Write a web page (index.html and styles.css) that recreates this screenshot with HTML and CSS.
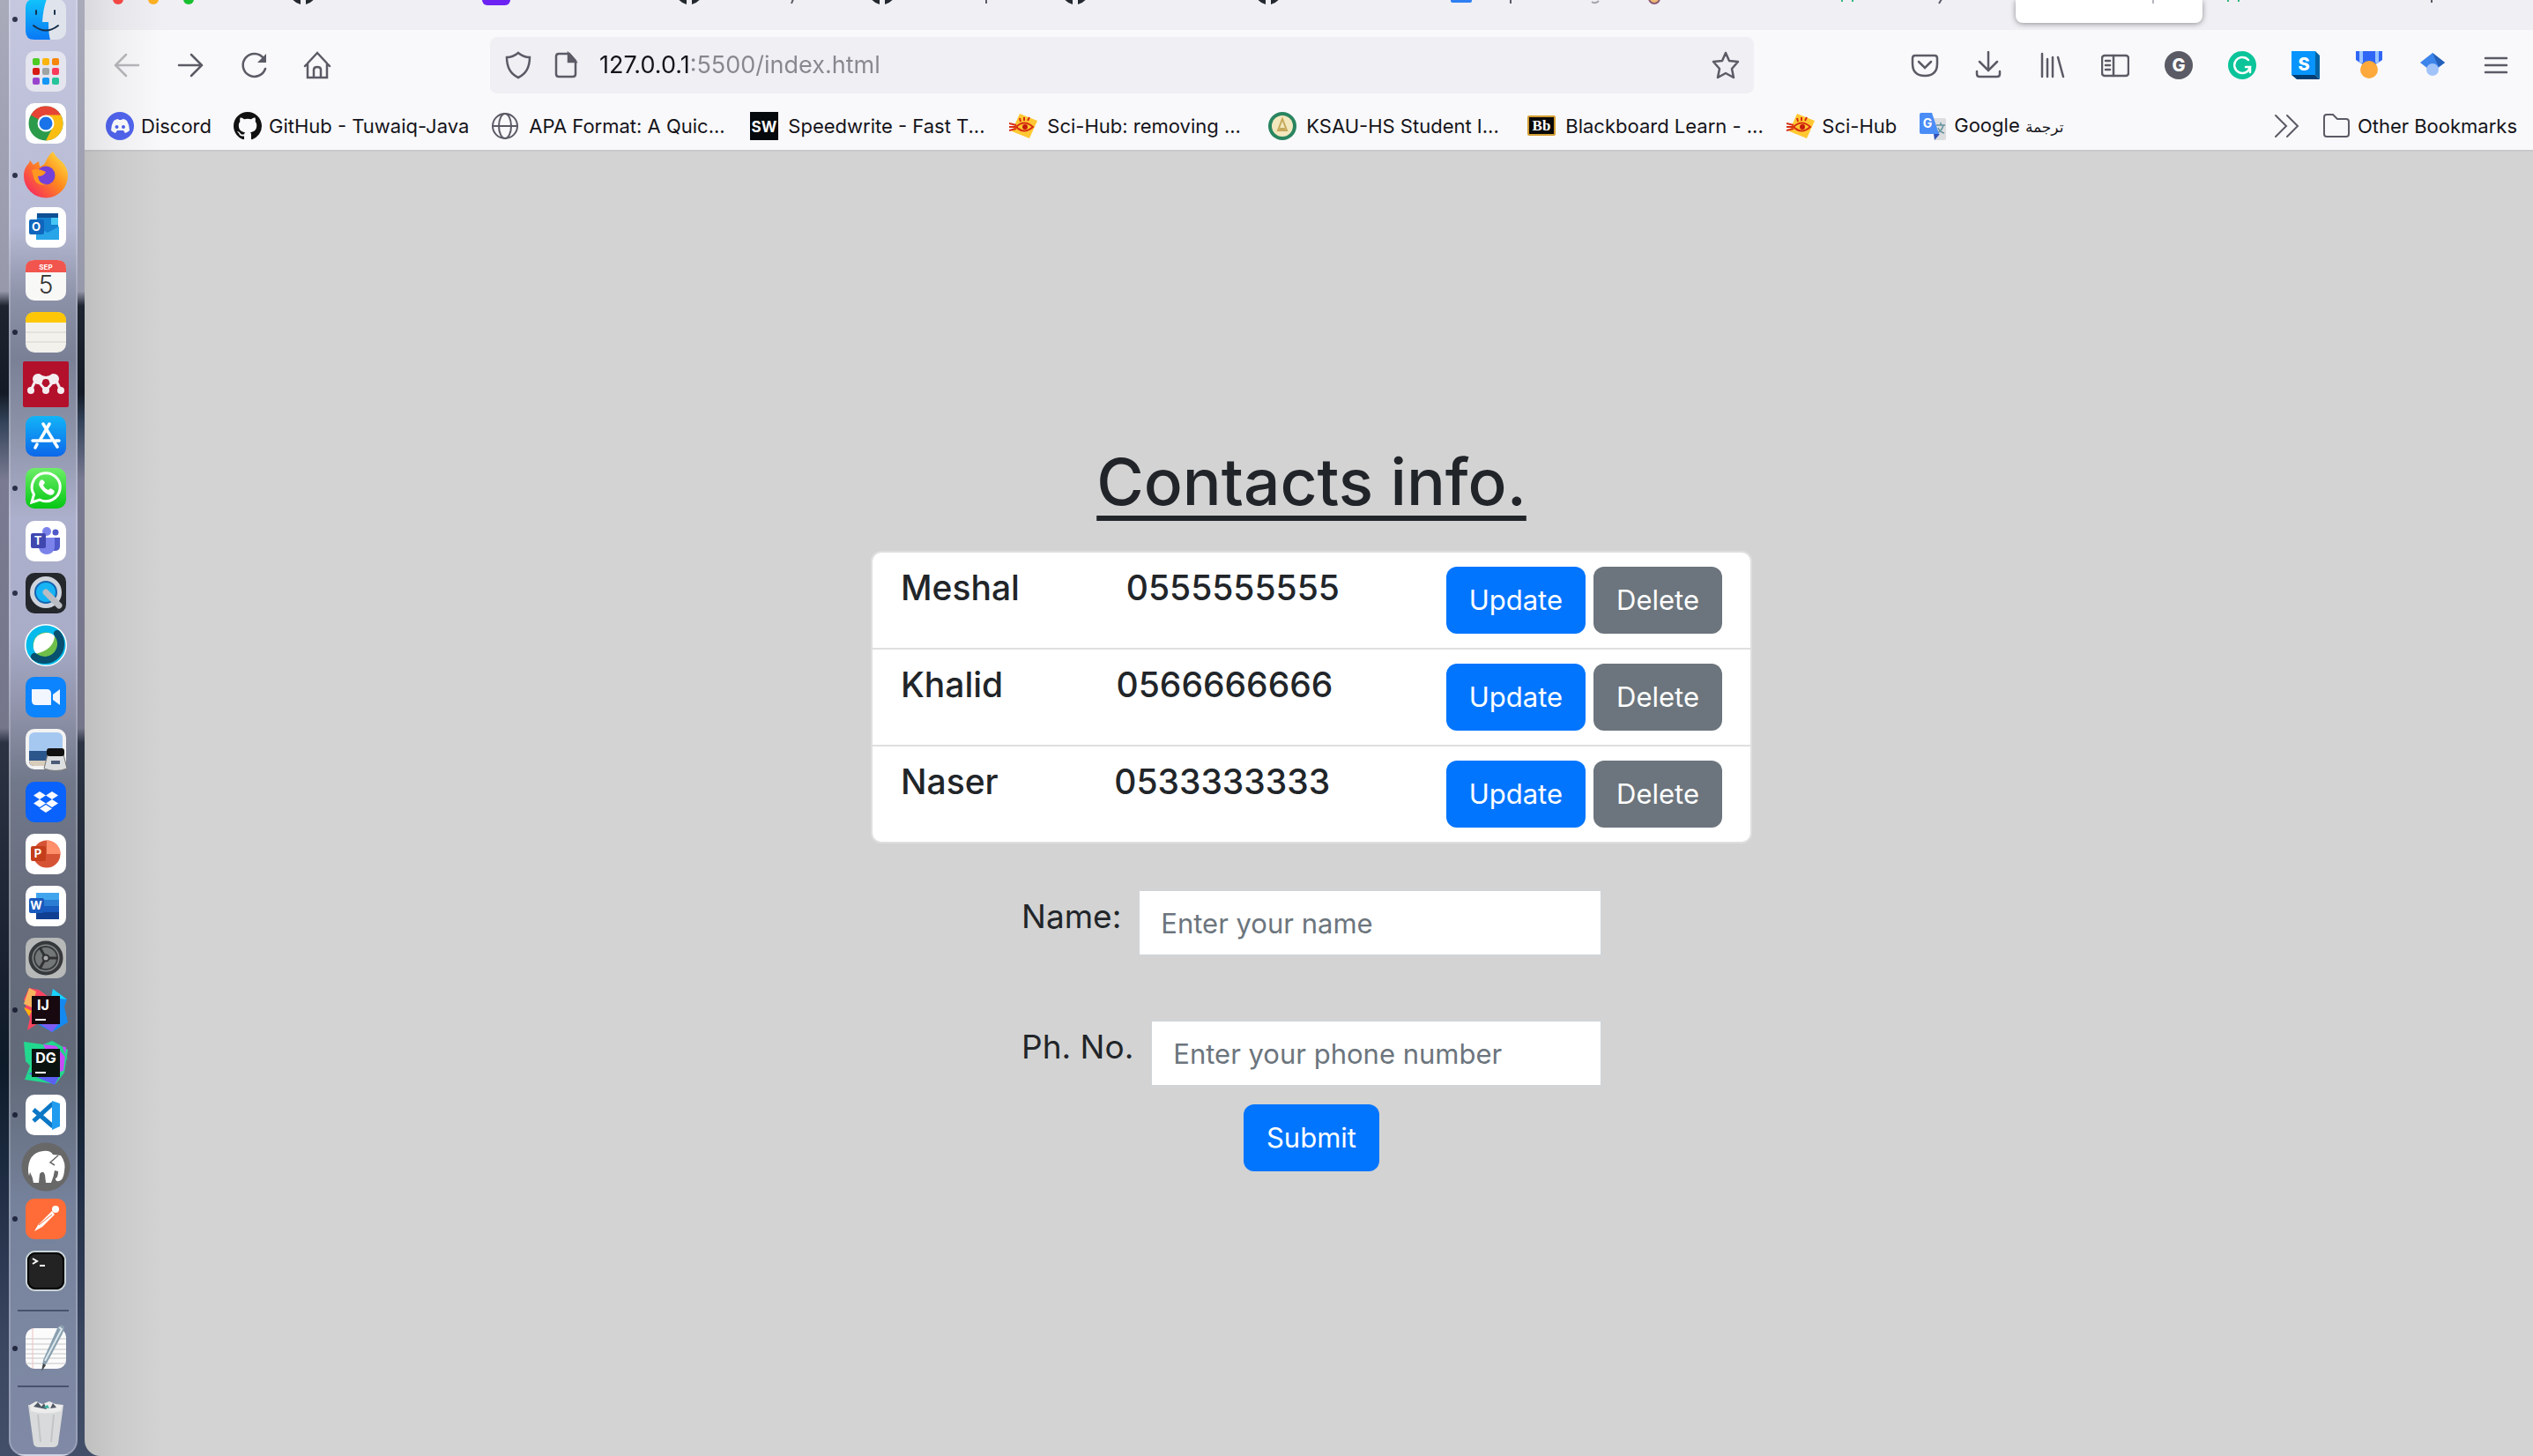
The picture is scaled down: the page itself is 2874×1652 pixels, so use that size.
FILE: index.html
```html
<!DOCTYPE html>
<html lang="en">
<head>
<meta charset="utf-8">
<title>Contacts info.</title>
<link rel="stylesheet" href="styles.css">
</head>
<body>
<aside class="dock" aria-label="Dock">
  <ul class="apps">
    <li class="running"><svg viewBox="0 0 56 56"><defs><linearGradient id="finder" x2="0" y2="1"><stop stop-color="#10c3fb"/><stop offset="1" stop-color="#0a78f5"/></linearGradient></defs><rect x="5" y="5" width="46" height="46" rx="10" fill="#dfe4ec"/><path d="M33 5H15Q5 5 5 15v26q0 10 10 10h18q-2-6-2-20h-7Q25 15 29 5Z" fill="url(#finder)"/><path d="M17 18v4M38 18v4M14 35q14 11 28 0" fill="none" stroke="#17304a" stroke-width="2" stroke-linecap="round"/></svg></li>
    <li><svg viewBox="0 0 56 56"><rect x="5" y="5" width="46" height="46" rx="10" fill="#e4e5ee"/><g><rect x="13" y="13" width="8" height="8" rx="2" fill="#4ccb22"/><rect x="24" y="13" width="8" height="8" rx="2" fill="#fbb40a"/><rect x="35" y="13" width="8" height="8" rx="2" fill="#f5860a"/><rect x="13" y="24" width="8" height="8" rx="2" fill="#d81a14"/><rect x="24" y="24" width="8" height="8" rx="2" fill="#9ea3a4"/><rect x="35" y="24" width="8" height="8" rx="2" fill="#f93a5c"/><rect x="13" y="35" width="8" height="8" rx="2" fill="#9944cc"/><rect x="24" y="35" width="8" height="8" rx="2" fill="#1397f5"/><rect x="35" y="35" width="8" height="8" rx="2" fill="#27c39a"/></g></svg></li>
    <li><svg viewBox="0 0 56 56"><rect x="5" y="5" width="46" height="46" rx="10" fill="#fff"/><circle cx="28" cy="28" r="19.500" fill="#2b9b4b"/><path d="M28 28 11 18.500A19.500 19.500 0 0 1 45 18.500Z" fill="#e64435"/><path d="M28 18.500h17A19.500 19.500 0 0 1 28 47.500L36 32Z" fill="#fcbd12"/><circle cx="28" cy="28" r="9.500" fill="#fff"/><circle cx="28" cy="28" r="7.500" fill="#1a73e8"/></svg></li>
    <li class="running"><svg viewBox="0 0 56 56"><defs><linearGradient id="fox" x1="1" x2="0" y2="1"><stop stop-color="#fff04a"/><stop offset=".45" stop-color="#ff8a1c"/><stop offset="1" stop-color="#f5156c"/></linearGradient></defs><path d="M36 1q3 5 6 8c7 5 11 12 11 19a25 25 0 0 1-50 1c0-8 3-12 6-15l1-3 4 5 6-4 1 6q5-1 7-6 3-7 8-11Z" fill="url(#fox)"/><circle cx="28" cy="28" r="10.500" fill="#7540d8"/><path d="M12 22q7-3 16 2-2 5-9 5 1 9 10 9-9 3-14-5Z" fill="#ff9720"/></svg></li>
    <li><svg viewBox="0 0 56 56"><rect x="5" y="5" width="46" height="46" rx="10" fill="#fff"/><path d="M18 12h24v30H17Z" fill="#1481d1"/><path d="M18 12h24v5H18Z" fill="#0c4f94"/><path d="M34 17h8v8h-8Z" fill="#45c6f5"/><path d="m17 27 13 7 13-7v15H17Z" fill="#28a5e8"/><rect x="9" y="19" width="17" height="17" rx="2" fill="#0f66bc"/><text x="17" y="32" class="glyph">O</text></svg></li>
    <li><svg viewBox="0 0 56 56"><rect x="5" y="5" width="46" height="46" rx="10" fill="#f8f8f6"/><path d="M5 19v-4Q5 5 15 5h26q10 0 10 10v4Z" fill="#f2554d"/><text x="28" y="16" class="glyph tiny">SEP</text><text x="28" y="43" class="glyph day">5</text></svg></li>
    <li class="running"><svg viewBox="0 0 56 56"><rect x="5" y="5" width="46" height="46" rx="10" fill="#f3f1ec"/><path d="M5 17v-2Q5 5 15 5h26q10 0 10 10v2Z" fill="#fdc708"/><path d="M5 28h46M5 39h46" stroke="#d5d3cd"/></svg></li>
    <li><svg viewBox="0 0 56 56"><rect x="2" y="2" width="52" height="52" rx="2" fill="#b3102c"/><path d="m11 35 6-13 11 13 11-13 6 13" stroke="#f4edf0" stroke-width="3" fill="none"/><g fill="#f4edf0"><circle cx="19" cy="22" r="6"/><circle cx="37" cy="22" r="6"/><path d="M20 16q8 6 16 0l1 12q-9-4-18 0Z"/><circle cx="11" cy="35" r="4"/><circle cx="28" cy="35" r="4"/><circle cx="45" cy="35" r="4"/></g><circle cx="28" cy="26" r="4" fill="#b3102c"/></svg></li>
    <li><svg viewBox="0 0 56 56"><defs><linearGradient id="store" x2="0" y2="1"><stop stop-color="#12b4f8"/><stop offset="1" stop-color="#0c67ea"/></linearGradient></defs><rect x="5" y="5" width="46" height="46" rx="10" fill="url(#store)"/><path d="M32 14 21 33M25 14l16 26M13 33h21M39 33h4M18 37l-2 4" fill="none" stroke="#fff" stroke-width="3.500" stroke-linecap="round"/></svg></li>
    <li class="running"><svg viewBox="0 0 56 56"><defs><linearGradient id="wa" x2="0" y2="1"><stop stop-color="#6dee68"/><stop offset="1" stop-color="#04c713"/></linearGradient></defs><rect x="5" y="5" width="46" height="46" rx="10" fill="url(#wa)"/><path d="M12 44l2.500-9A16 16 0 1 1 21 41Z" fill="none" stroke="#fff" stroke-width="3"/><path d="M22 19q-4 4 1 10 8 9 13 6 4-4-1-6-2-2-4 1-5-2-6-6 3-2 1-4-2-3-4-1Z" fill="#fff"/></svg></li>
    <li><svg viewBox="0 0 56 56"><rect x="5" y="5" width="46" height="46" rx="10" fill="#fff"/><circle cx="29" cy="17" r="5" fill="#7b83eb"/><circle cx="39" cy="18" r="3.500" fill="#5059c9"/><path d="M35 24h9v10q0 5-6 5h-3Z" fill="#5059c9"/><path d="M20 24h18v12q-2 7-9 7t-9-7Z" fill="#7b83eb"/><rect x="11" y="19" width="17" height="17" rx="2" fill="#4048b0"/><text x="19" y="32" class="glyph">T</text></svg></li>
    <li class="running"><svg viewBox="0 0 56 56"><rect x="5" y="5" width="46" height="46" rx="10" fill="#24272b"/><circle cx="28" cy="27" r="15" fill="#16b4f4" stroke="#cfd3dc" stroke-width="6"/><circle cx="28" cy="27" r="12" fill="none" stroke="#1565b0" stroke-width="2"/><path d="m28 27 15 15" stroke="#b9bcc2" stroke-width="7" stroke-linecap="round"/></svg></li>
    <li><svg viewBox="0 0 56 56"><circle cx="28" cy="28" r="24" fill="#fff"/><circle cx="28" cy="28" r="18" fill="#6fbe4a"/><path d="M14 34Q12 15 29 14q7 0 9 2 0 17-22 22Z" fill="#fff"/><circle cx="28" cy="28" r="18.500" fill="none" stroke="#06bbeb" stroke-width="8"/><path d="M41 15A18.500 18.500 0 0 1 15 41" fill="none" stroke="#07506f" stroke-width="8" stroke-linecap="round"/></svg></li>
    <li><svg viewBox="0 0 56 56"><rect x="5" y="5" width="46" height="46" rx="10" fill="#0b84fd"/><path d="M12 19h17q5 0 5 5v13H17q-5 0-5-5ZM36 25l8-6v18l-8-6Z" fill="#f1f6ff"/></svg></li>
    <li><svg viewBox="0 0 56 56"><rect x="5" y="5" width="46" height="46" rx="10" fill="#f3f3f3"/><rect x="9" y="9" width="38" height="38" rx="6" fill="#a5c8f1"/><path d="M9 30h38v11q0 6-6 6H15q-6 0-6-6Z" fill="#2b568c"/><path d="M9 41h30v6H15q-6 0-6-6Z" fill="#d8cdbb"/><path d="m30 34-4 16q13 5 26 0l-4-16Z" fill="#dddedf" stroke="#777"/><rect x="29" y="27" width="20" height="9" rx="3" fill="#111"/><path d="M34 43h10" stroke="#4c5b77" stroke-width="4"/></svg></li>
    <li><svg viewBox="0 0 56 56"><rect x="5" y="5" width="46" height="46" rx="10" fill="#0a62fc"/><path d="m21 16 7 4.500-7 4.500-7-4.500ZM35 16l7 4.500-7 4.500-7-4.500ZM21 25l7 4.500-7 4.500-7-4.500ZM35 25l7 4.500-7 4.500-7-4.500ZM28 31l7 4.500-7 4.500-7-4.500Z" fill="#f8faff"/></svg></li>
    <li><svg viewBox="0 0 56 56"><rect x="5" y="5" width="46" height="46" rx="10" fill="#fff"/><circle cx="29" cy="28" r="15.500" fill="#d65335"/><path d="M29 12.500A15.500 15.500 0 0 1 44.500 28H29Z" fill="#ff8f6b"/><rect x="11" y="19" width="17" height="17" rx="2" fill="#c43e1c"/><text x="19" y="32" class="glyph">P</text></svg></li>
    <li><svg viewBox="0 0 56 56"><rect x="5" y="5" width="46" height="46" rx="10" fill="#fff"/><path d="M17 13h26v8H17Z" fill="#41a5ee"/><path d="M17 21h26v7H17Z" fill="#2b7cd3"/><path d="M17 28h26v7H17Z" fill="#185abd"/><path d="M17 35h26v8H17Z" fill="#103f91"/><rect x="9" y="19" width="17" height="17" rx="2" fill="#185abd"/><text x="17" y="32" class="glyph">W</text></svg></li>
    <li><svg viewBox="0 0 56 56"><rect x="5" y="5" width="46" height="46" rx="10" fill="#b6b9b8"/><circle cx="28" cy="28" r="17.500" fill="#86898a" stroke="#36393b" stroke-width="4"/><circle cx="28" cy="28" r="13" fill="#747778" stroke="#3a3d3f" stroke-width="2"/><path d="M28 28h14M28 28l-7 12M28 28l-7-12" stroke="#303234" stroke-width="3"/><circle cx="28" cy="28" r="3.500" fill="#aaa" stroke="#303234" stroke-width="2"/></svg></li>
    <li class="running"><svg viewBox="0 0 56 56"><path d="m9 3 11 2 14 10-9 24-18 12 3-14-6-10 2-6-3-5Z" fill="#fc4560"/><path d="m9 3 8 4-5 18-9-4Z" fill="#f8b45d"/><path d="m3 25 9 4-3 6Z" fill="#fdb60d"/><path d="m36 4 16 12-3 8 4 18-18 11-16-9 14-25Z" fill="#1489f1"/><path d="m36 4 16 12-18-2Z" fill="#19d3fa"/><path d="m19 42 16 11 8-10Z" fill="#7b5df2"/><rect x="12" y="12" width="32" height="32" fill="#17090f"/><text x="25" y="28" class="glyph logo">IJ</text><path d="M16 39h12" stroke="#fff" stroke-width="2"/></svg></li>
    <li><svg viewBox="0 0 56 56"><path d="m3 4 22 3 10-4 18 10-4 26-10 13-35-5 6-16-5-5Z" fill="#22d88f"/><path d="m25 7 26 3-3 27-9 2Z" fill="#c74df5"/><path d="m8 40 30 13 6-11-18-6Z" fill="#5b5ff2"/><path d="m35 3 18 22-6-15Z" fill="#21d789"/><rect x="12" y="12" width="32" height="32" fill="#0b1310"/><text x="28" y="28" class="glyph logo">DG</text><path d="M16 39h12" stroke="#fff" stroke-width="2"/></svg></li>
    <li class="running"><svg viewBox="0 0 56 56"><rect x="5" y="5" width="46" height="46" rx="10" fill="#fff"/><path d="m14 22 22 19M14 35l22-20" stroke="#0b77c5" stroke-width="5"/><path d="m35 12 9 3v26l-9 4Z" fill="#1f9cf0"/></svg></li>
    <li><svg viewBox="0 0 56 56"><circle cx="28" cy="28" r="27.500" fill="#686868"/><path d="M8 34q-1-22 17-24 8-1 11 4l9 1q6 8 4 18-1 10-6 11-4 1-4-3 3-1 3-8l-4-1q-1 7-4 14h-6l-1-9q-2-6-6-1l-1 10h-6q-1-7-4-12l-1 4Z" fill="#fff"/><path d="m42 15-9 8 5 3" fill="none" stroke="#686868" stroke-width="1.500"/></svg></li>
    <li class="running"><svg viewBox="0 0 56 56"><rect x="5" y="5" width="46" height="46" rx="10" fill="#ff6c37"/><circle cx="39" cy="17" r="4" fill="#fff"/><path d="m35 19 3 4-14 14-9 5 4-7Z" fill="#fff"/><path d="m20 35 15-12" stroke="#ff6c37"/></svg></li>
    <li><svg viewBox="0 0 56 56"><rect x="6" y="6" width="44" height="44" rx="10" fill="#232323" stroke="#c9d3d6" stroke-width="2"/><rect x="8" y="8" width="40" height="40" rx="8" fill="none" stroke="#000" stroke-width="2"/><path d="m13 14 5 3-5 3M21 22h6" fill="none" stroke="#fff" stroke-width="2"/></svg></li>
  </ul>
  <hr>
  <ul class="files">
    <li class="running"><svg viewBox="0 0 56 56"><rect x="5" y="5" width="46" height="46" rx="10" fill="#fbfbfb"/><path d="M5 17h46M5 23h46M5 29h46M5 34h46M5 39h46M5 45h46" stroke="#c6c6c9"/><path d="M13 5v46" stroke="#efc0c0"/><path d="m45 1 4 2q0 4-2 8L30 43l-7 11 2-13L41 5Z" fill="#8aa0af"/><path d="m43 4 3 2-19 36" fill="none" stroke="#dbe7ee" stroke-width="2"/><path d="m25 45-2 9 5-7Z" fill="#444"/></svg></li>
  </ul>
  <hr>
  <ul class="files">
    <li><svg viewBox="0 0 56 56"><path d="M8 6h40l-6 44q-1 4-6 4H20q-5 0-6-4Z" fill="#d9dadb"/><path d="m10 6 7-4 7 3 8-3 7 3 8 1-2 7q-17 5-34 0Z" fill="#ececec"/><path d="m14 8 5-5 4 5 3-4 3 7ZM33 10l3-6 4 5Z" fill="#4e5763"/><path d="m25 9 5-3 2 4Z" fill="#32b1a0"/><path d="m19 17 3 31M37 17l-3 31" stroke="#c2c4c6" stroke-width="2"/></svg></li>
  </ul>
</aside>

<div class="window">
  <header class="chrome">
    <div class="tabs">
      <div class="lights"><i class="close"></i><i class="min"></i><i class="max"></i></div>
      <div class="tab"><svg viewBox="0 0 192 24"><path d="M3 16h10v7q-7-2-10-7ZM29 16H19v7q7-2 10-7Z" fill="#24292f"/></svg></div>
      <div class="tab"><svg viewBox="0 0 192 24"><rect y="-8" width="32" height="32" rx="6" fill="#6b22f3"/></svg></div>
      <div class="tab"><svg viewBox="0 0 192 24"><path d="M3 16h10v7q-7-2-10-7ZM29 16H19v7q7-2 10-7Z" fill="#24292f"/><path d="m134 17-2 5" stroke="#5b5b66" stroke-width="2"/></svg></div>
      <div class="tab"><svg viewBox="0 0 192 24"><path d="M3 16h10v7q-7-2-10-7ZM29 16H19v7q7-2 10-7Z" fill="#24292f"/><path d="M134 17v5" stroke="#5b5b66" stroke-width="2"/></svg></div>
      <div class="tab"><svg viewBox="0 0 192 24"><path d="M3 16h10v7q-7-2-10-7ZM29 16H19v7q7-2 10-7Z" fill="#24292f"/></svg></div>
      <div class="tab"><svg viewBox="0 0 192 24"><path d="M3 16h10v7q-7-2-10-7ZM29 16H19v7q7-2 10-7Z" fill="#24292f"/></svg></div>
      <div class="tab"><svg viewBox="0 0 192 24"><rect x="4" y="0" width="24" height="21" rx="2" fill="#2f7ff2"/><path d="M72 17v5" stroke="#5b5b66" stroke-width="2"/><path d="M164 20q4 3 8-1" fill="none" stroke="#a5a5ad" stroke-width="2"/></svg></div>
      <div class="tab"><svg viewBox="0 0 192 24"><circle cx="16" cy="16" r="6" fill="#edbb73" stroke="#8d5a76" stroke-width="2"/></svg></div>
      <div class="tab"><svg viewBox="0 0 192 24"><path d="M10 17v3M22 17v3" stroke="#2eb67d" stroke-width="2"/><path d="m123 17-3 5" stroke="#5b5b66" stroke-width="2"/></svg></div>
      <div class="tab active"><svg viewBox="0 0 192 24"><path d="M144 17v5" stroke="#b5b5bb" stroke-width="2"/></svg></div>
      <div class="tab"><svg viewBox="0 0 192 24"><path d="M10 17v3M22 17v3" stroke="#2eb67d" stroke-width="2"/></svg></div>
      <div class="tab"><svg viewBox="0 0 192 24"><path d="M22 17v4" stroke="#5b5b66" stroke-width="2"/></svg></div>
    </div>

    <div class="toolbar">
      <div class="history">
        <button class="tool faded" aria-label="Back"><svg viewBox="0 0 32 32"><path d="M29 16H3M15 4 3 16l12 12"/></svg></button>
        <button class="tool" aria-label="Forward"><svg viewBox="0 0 32 32"><path d="M3 16h26M17 4l12 12-12 12"/></svg></button>
        <button class="tool" aria-label="Reload"><svg viewBox="0 0 32 32"><path d="M29 20A13 13 0 1 1 27 8"/><path d="M30 3v10H20Z" fill="currentColor" stroke="none"/></svg></button>
        <button class="tool" aria-label="Home"><svg viewBox="0 0 32 32"><path d="M2 17 16 2l14 15M5 14v16h22V14M12 30V21q0-3 4-3t4 3v9"/></svg></button>
      </div>
      <div class="address">
        <svg viewBox="0 0 32 32"><path d="M16 2q6 5 13 5 0 17-13 23Q3 24 3 7q7 0 13-5Z"/></svg>
        <svg viewBox="0 0 32 32"><path d="M8 3h12l7 8v15q0 3-3 3H8q-3 0-3-3V6q0-3 3-3Z"/><path d="M19 3v9h8Z" fill="currentColor"/></svg>
        <input type="text" value="127.0.0.1:5500/index.html" aria-label="Address">
        <svg viewBox="0 0 32 32"><path d="m16 2 4 9 10 1-7 8 2 10-9-5-9 5 2-10-7-8 10-1Z" stroke-linejoin="round"/></svg>
      </div>
      <div class="extensions">
        <button class="tool" aria-label="Pocket"><svg viewBox="0 0 32 32"><path d="M5 5h22q3 0 3 3v6q0 14-14 14T2 14V8q0-3 3-3ZM9 12l7 7 7-7"/></svg></button>
        <button class="tool" aria-label="Downloads"><svg viewBox="0 0 32 32"><path d="M16 1v20M6 12l10 10 10-10M3 23v3q0 3 3 3h20q3 0 3-3v-3"/></svg></button>
        <button class="tool" aria-label="Library"><svg viewBox="0 0 32 32"><path d="M5 3v26M11 9v20M17 7v22M23 7l6 22"/></svg></button>
        <button class="tool" aria-label="Sidebars"><svg viewBox="0 0 32 32"><rect x="1" y="5" width="30" height="23" rx="3"/><path d="M14 5v23M5 11h5M5 16h5M5 21h5"/></svg></button>
        <button class="tool" aria-label="Grammar"><svg viewBox="0 0 32 32"><circle cx="16" cy="16" r="16" fill="#5b5b66" stroke="none"/><text x="16" y="23" class="glyph badge">G</text></svg></button>
        <button class="tool" aria-label="Grammarly"><svg viewBox="0 0 32 32"><circle cx="16" cy="16" r="16" fill="#0bc49a" stroke="none"/><path d="M23 10a9 9 0 1 0 2 8h-5M25 18v6" stroke="#fff"/></svg></button>
        <button class="tool" aria-label="Speechify"><svg viewBox="0 0 32 32"><path d="M0 27h27l5 5H6Z" fill="#023e73" stroke="none"/><path d="M27 0l5 5v27l-5-5Z" fill="#0264a5" stroke="none"/><path d="M0 0h27v27H0Z" fill="#0795fd" stroke="none"/><text x="14" y="22" class="glyph badge">S</text></svg></button>
        <button class="tool" aria-label="Awards"><svg viewBox="0 0 32 32"><path d="M1 0h30v10l-9 6H10L1 10Z" fill="#2f66f6" stroke="none"/><path d="M7 0v12M25 0v12" stroke="#9cc5ff" stroke-width="4"/><circle cx="16" cy="21" r="10" fill="#fda93b" stroke="none"/></svg></button>
        <button class="tool" aria-label="Scholar"><svg viewBox="0 0 32 32"><path d="m16 2 14 11-14 11L2 13Z" fill="#3d85ea" stroke="none"/><path d="m16 2 14 11-7 5Z" fill="#2460b9" stroke="none"/><circle cx="16" cy="21" r="7" fill="#a2c3fa" stroke="none"/></svg></button>
        <button class="tool" aria-label="Menu"><svg viewBox="0 0 32 32"><path d="M4 8h24M4 16h24M4 24h24"/></svg></button>
      </div>
    </div>

    <nav class="bookmarks" aria-label="Bookmarks">
      <a href="#"><svg viewBox="0 0 32 32"><circle cx="16" cy="16" r="16" fill="#5165f0"/><path d="M9 10q3-2 5-2l1 1h3l1-1q3 0 5 2 3 5 3 11-2 2-5 3l-2-3h-7l-2 3q-3-1-5-3 0-6 3-11Z" fill="#fff"/><circle cx="12.500" cy="17" r="2" fill="#5165f0"/><circle cx="20" cy="17" r="2" fill="#5165f0"/></svg>Discord</a>
      <a href="#"><svg viewBox="0 0 16 16"><path fill="#111" d="M8 0C3.580 0 0 3.580 0 8c0 3.540 2.290 6.530 5.470 7.590.4.070.55-.17.55-.38 0-.19-.01-.82-.01-1.490-2.010.37-2.530-.49-2.690-.94-.09-.23-.48-.94-.82-1.130-.28-.15-.68-.52-.01-.53.63-.01 1.080.58 1.230.82.72 1.210 1.870.87 2.330.66.07-.52.28-.87.51-1.070-1.780-.2-3.640-.89-3.640-3.950 0-.87.31-1.590.82-2.150-.08-.2-.36-1.020.08-2.120 0 0 .67-.21 2.200.82.64-.18 1.320-.27 2-.27s1.360.09 2 .27c1.530-1.040 2.200-.82 2.200-.82.44 1.100.16 1.920.08 2.120.51.56.82 1.270.82 2.150 0 3.070-1.870 3.750-3.650 3.950.29.25.54.73.54 1.480 0 1.070-.01 1.930-.01 2.200 0 .21.15.46.55.38A8.010 8.010 0 0 0 16 8c0-4.420-3.580-8-8-8Z"/></svg>GitHub - Tuwaiq-Java</a>
      <a href="#" class="clipped"><svg viewBox="0 0 32 32" class="line"><circle cx="16" cy="16" r="14"/><ellipse cx="16" cy="16" rx="7" ry="14"/><path d="M2 16h28"/></svg>APA Format: A Quic...</a>
      <a href="#" class="clipped"><svg viewBox="0 0 32 32"><path d="M0 0h32v32H0Z" fill="#05090b"/><text x="16" y="23" class="glyph sw">SW</text></svg>Speedwrite - Fast T...</a>
      <a href="#" class="clipped"><svg viewBox="0 0 32 32"><path d="m12 2 20 8-9 20-20-8Z" fill="#ffc832"/><path d="M8 17q9-9 19 0-10 9-19 0ZM0 13l8 2M0 17h7M0 21l8-2M13 11l-1-4M17 10V6M21 10l2-4" stroke="#d62d12" stroke-width="2" fill="none"/><circle cx="18" cy="17" r="3" fill="#c31b0c"/></svg>Sci-Hub: removing ...</a>
      <a href="#" class="clipped"><svg viewBox="0 0 32 32"><circle cx="16" cy="16" r="16" fill="#298560"/><circle cx="16" cy="16" r="12" fill="#f3e7bd"/><path d="m16 8 5 13H11ZM13 19h6" fill="none" stroke="#c5a85b" stroke-width="2"/></svg>KSAU-HS Student I...</a>
      <a href="#" class="clipped"><svg viewBox="0 0 32 32"><rect x="1" y="5" width="30" height="21" rx="1" fill="#090909" stroke="#d49d33" stroke-width="2"/><text x="16" y="21" class="glyph serif">Bb</text></svg>Blackboard Learn - ...</a>
      <a href="#"><svg viewBox="0 0 32 32"><path d="m12 2 20 8-9 20-20-8Z" fill="#ffc832"/><path d="M8 17q9-9 19 0-10 9-19 0ZM0 13l8 2M0 17h7M0 21l8-2M13 11l-1-4M17 10V6M21 10l2-4" stroke="#d62d12" stroke-width="2" fill="none"/><circle cx="18" cy="17" r="3" fill="#c31b0c"/></svg>Sci-Hub</a>
      <a href="#"><svg viewBox="0 0 32 32"><path d="M14 7h15q2 0 2 2v21q0 2-2 2H18Z" fill="#dcdddf"/><path d="M20 15h10M25 12v3M28 15q-2 7-7 9M22 18q2 5 7 6" stroke="#62929e" stroke-width="1.500" fill="none"/><path d="M17 25h7l-6 7Z" fill="#3255ba"/><path d="M3 1h12l8 24H3q-2 0-2-2V3q0-2 2-2Z" fill="#4b8df6"/><text x="10" y="18" class="glyph mark">G</text></svg><span>Google <span class="arabic" lang="ar">ترجمة</span></span></a>
      <span class="spacer"></span>
      <button class="more" aria-label="More bookmarks"><svg viewBox="0 0 32 32" class="line"><path d="m4 4 12 12L4 28M17 4l12 12-12 12"/></svg></button>
      <a href="#" class="folder"><svg viewBox="0 0 32 32" class="line"><path d="M5 3h7l5 5h10q3 0 3 3v14q0 3-3 3H5q-3 0-3-3V6q0-3 3-3Z"/></svg>Other Bookmarks</a>
    </nav>
  </header>

  <main class="page">
    <h1>Contacts info.</h1>
    <ul class="contacts">
      <li><h2>Meshal</h2><h2>0555555555</h2><div class="actions"><button class="btn primary">Update</button><button class="btn secondary">Delete</button></div></li>
      <li><h2>Khalid</h2><h2>0566666666</h2><div class="actions"><button class="btn primary">Update</button><button class="btn secondary">Delete</button></div></li>
      <li><h2>Naser</h2><h2>0533333333</h2><div class="actions"><button class="btn primary">Update</button><button class="btn secondary">Delete</button></div></li>
    </ul>
    <form class="entry">
      <div class="field"><label for="name">Name:</label><input id="name" type="text" placeholder="Enter your name"></div>
      <div class="field"><label for="phone">Ph. No.</label><input id="phone" type="text" placeholder="Enter your phone number"></div>
      <button class="btn primary" type="button">Submit</button>
    </form>
  </main>
</div>
</body>
</html>
```
FILE: styles.css
```css
* { box-sizing: border-box; }

body {
  margin: 0;
  height: 100vh;
  display: flex;
  gap: 8px;
  padding-left: 10px;
  overflow: hidden;
  font-family: Inter, "DejaVu Sans", sans-serif;
  color: #212529;
  background: linear-gradient(#a9abbb 0%, #9799ab 20%, #1e2430 21%, #141a26 27%, #33435a 29%, #7a7b92 33%, #75768a 50%, #2c3444 51%, #1a2130 66%, #0d1a28 73%, #1c2a40 80%, #3a4560 92%, #434f69 100%);
}

ul { list-style: none; margin: 0; padding: 0; }
button, input { font-family: inherit; }

/* Dock */
.dock {
  flex: none;
  width: 78px;
  height: calc(100vh + 8px);
  margin-top: -8px;
  padding-bottom: 6px;
  display: flex;
  flex-direction: column;
  border-radius: 0 0 18px 18px;
  border: solid #ffffff33;
  border-width: 0 2px 2px;
  background: linear-gradient(#c6c8e0 0%, #b7bad4 16%, #8b91a7 21%, #7a8197 25%, #8c93a8 30%, #adb0cc 36%, #aaadc8 44%, #9093aa 49%, #71788a 54%, #666c7b 64%, #626b7a 74%, #76829c 83%, #808aa6 100%);
}
.apps { flex: 1; display: grid; grid-auto-rows: 1fr; }
.dock li { position: relative; display: flex; align-items: center; padding-left: 12px; min-height: 0; }
.dock svg { display: block; width: 56px; height: 56px; }
.dock li.running::before {
  content: "";
  position: absolute;
  left: 2px;
  width: 6px;
  height: 6px;
  border-radius: 50%;
  background: #0d1228cc;
}
.dock hr { width: 58px; height: 2px; margin: 14px 8px; border: 0; background: #47536e; }
.files { flex: none; }

.glyph { fill: #fff; stroke: none; text-anchor: middle; font: 700 13px Inter, sans-serif; }
.tiny { font-size: 8px; }
.day { fill: #333; font-size: 28px; font-weight: 300; }
.badge { font-size: 20px; font-weight: 800; }
.mark { font-size: 14px; }
.logo { font-size: 16px; }
.sw { font-size: 17px; }
.serif { font: 700 17px "Liberation Serif", serif; }

/* Browser window */
.window {
  position: relative;
  flex: 1;
  min-width: 0;
  display: flex;
  flex-direction: column;
  overflow: hidden;
  border-radius: 0 0 0 18px;
  background: #d3d3d3;
}
.window::after {
  content: "";
  position: absolute;
  inset: 0 auto 0 0;
  width: 90px;
  pointer-events: none;
  background: linear-gradient(90deg, #00000018, #0000000a 40%, #0000);
}
.chrome { flex: none; background: #f9f9fb; border-bottom: 2px solid #c9c9cb; color: #15141a; }

.tabs { height: 34px; display: flex; background: #f0eff4; overflow: hidden; }
.lights { flex: none; width: 220px; display: flex; gap: 28px; padding-left: 32px; margin-top: -7px; }
.lights i { width: 12px; height: 12px; border-radius: 50%; }
.close { background: #fb4b47; }
.min { background: #fdb022; }
.max { background: #18c02f; }
.tab { flex: 0 0 212px; height: 26px; padding-left: 12px; margin-right: 7px; }
.tab svg { display: block; width: 192px; height: 24px; margin-top: -18px; }
.tab.active { background: #fff; border-radius: 0 0 8px 8px; box-shadow: 0 1px 6px #0000006b; }

.toolbar { display: flex; align-items: center; padding: 8px 0; }
.history, .extensions { flex: none; display: flex; }
.history { width: 460px; padding-left: 12px; }
.extensions { margin-left: auto; padding-right: 6px; }
.tool { width: 72px; height: 64px; padding: 0; border: 0; background: none; color: #5b5b66; display: grid; place-items: center; }
.tool svg, .address svg { width: 32px; height: 32px; fill: none; stroke: currentColor; stroke-width: 2.500; stroke-linecap: round; }
.faded { color: #b8b8bd; }
.address {
  flex: 1;
  max-width: 1434px;
  height: 64px;
  display: flex;
  align-items: center;
  gap: 22px;
  padding: 0 16px;
  border-radius: 8px;
  background: #f0eff4;
  color: #5b5b66;
}
.address svg { flex: none; }
.address input {
  flex: 1;
  min-width: 0;
  padding: 0;
  border: 0;
  font-size: 27px;
  line-height: 40px;
  color: transparent;
  background: linear-gradient(90deg, #15141a 104px, #88878f 104px);
  -webkit-background-clip: text;
  background-clip: text;
}

.bookmarks { height: 56px; display: flex; align-items: center; gap: 25px; padding: 2px 18px 0 24px; font-size: 22px; line-height: 32px; white-space: nowrap; }
.bookmarks a { flex: none; display: flex; align-items: center; gap: 8px; color: inherit; text-decoration: none; }
.bookmarks svg { flex: none; width: 32px; height: 32px; }
.bookmarks .clipped { width: 269px; gap: 11px; }
.bookmarks .line { fill: none; stroke: #5b5b66; stroke-width: 2; stroke-linecap: round; }
.arabic { font-size: 17px; }
.spacer { flex: 1; }
.more { border: 0; padding: 0; background: none; display: flex; }

/* Page */
.page { flex: 1; display: flex; flex-direction: column; align-items: center; padding: 327px 0 0 6px; }
h1 { margin: 0 0 30px; font-size: 73px; line-height: 96px; font-weight: 500; text-decoration: underline; text-decoration-thickness: 6px; text-underline-offset: 12px; text-decoration-skip-ink: none; }
.contacts { width: 1000px; background: #fff; border: 2px solid #dfdfdf; border-radius: 12px; }
.contacts li { display: flex; justify-content: space-between; padding: 16px 32px; }
.contacts li + li { border-top: 2px solid #dfdfdf; }
h2 { margin: 0; font-size: 39px; line-height: 48px; font-weight: 500; }
.actions { display: flex; gap: 9px; }
.btn { height: 76px; padding: 0 26px; border: 0; border-radius: 12px; font-size: 31px; line-height: 48px; color: #fff; }
.primary { background: #0275ff; }
.secondary { background: #6c757d; }

.entry { width: 658px; display: flex; flex-direction: column; align-items: center; margin-top: 53px; }
.field { width: 100%; display: flex; gap: 20px; margin-bottom: 74px; font-size: 37px; line-height: 60px; }
.field input { flex: 1; min-width: 0; height: 74px; padding: 0 24px; border: 1px solid #ced4da; border-radius: 0; font-size: 31px; color: #495057; background: #fff; }
.field input::placeholder { color: #6c757d; opacity: 1; }
.field:nth-child(2) { margin-bottom: 21px; }
```
